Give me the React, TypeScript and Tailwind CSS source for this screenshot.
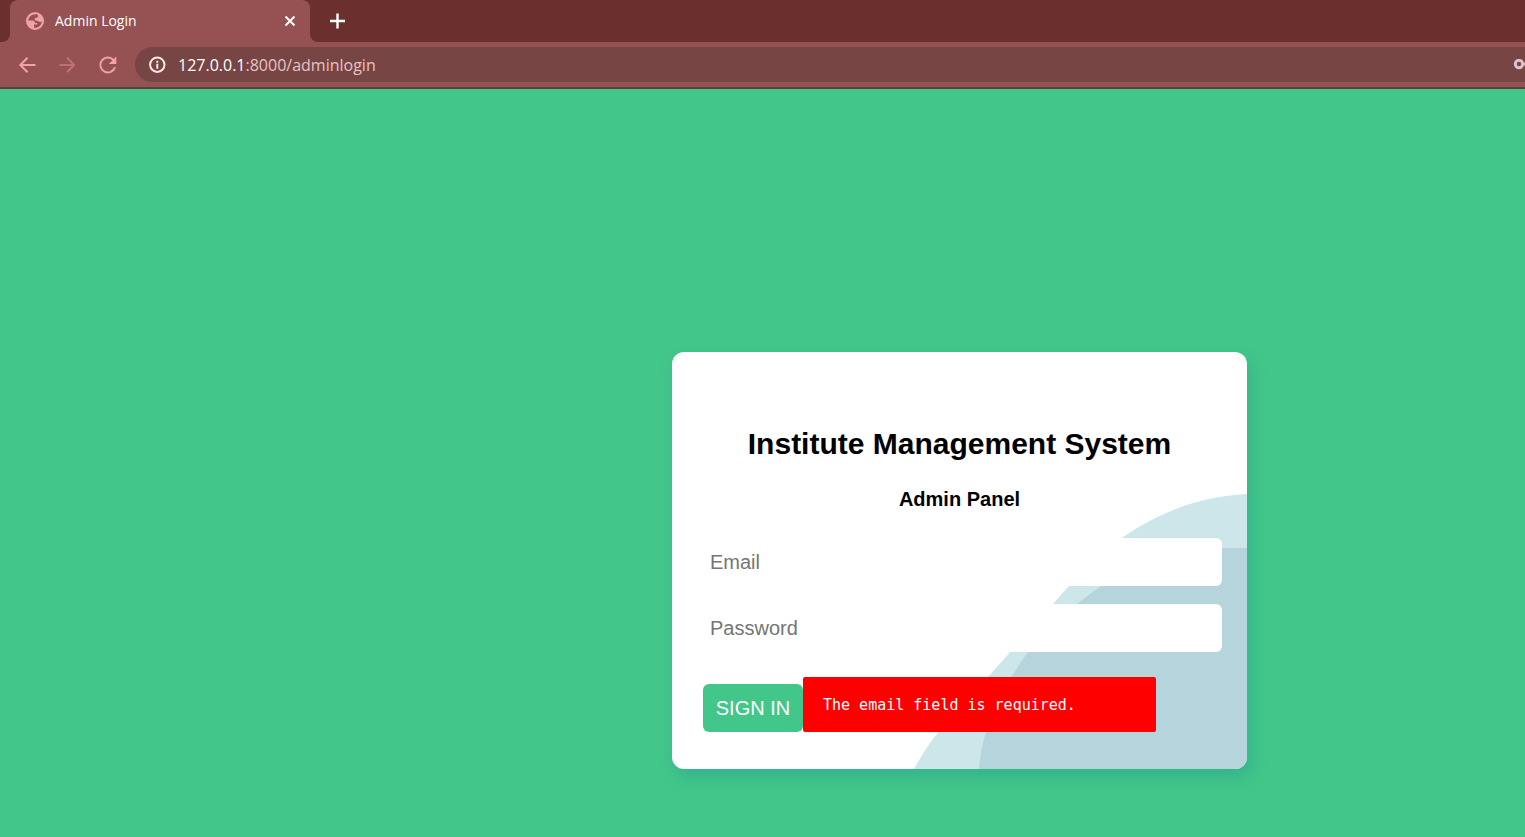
import React from "react";

function GlobeIcon() {
  return (
    <svg viewBox="0 0 18 18" className="size-[18px] shrink-0" aria-hidden="true">
      <circle cx="9" cy="9" r="9" fill="#f0a2a4" />
      <path
        d="M11.500 2.400C7 1.200 2.600 4.300 2.100 8.600H6.500C8 8.600 9 9.600 9 11H11.200V12.600H8V15.800C12.200 16.300 15.600 13.200 15.900 9.300C14.800 10.300 13.200 10.100 12.300 9.300C11.600 8.600 10.400 8.900 9.600 8.500C8.300 7.800 8.200 6.200 9.500 5.700H11C12 5.200 12.400 3.400 11.500 2.400Z"
        fill="#965152"
      />
    </svg>
  );
}

type IconProps = { d: string; fill?: string };

function LineIcon({ d, fill }: IconProps) {
  return (
    <svg viewBox="0 0 24 24" className="size-6" fill="none" stroke="currentColor" strokeWidth="2" aria-hidden="true">
      <path d={d} />
      {fill && <path d={fill} fill="currentColor" stroke="none" />}
    </svg>
  );
}

function BrowserChrome() {
  return (
    <header className="bg-[#965152] font-['Open_Sans','Noto_Sans',sans-serif]">
      <div className="flex h-[42px]">
        <div className="w-[10px] rounded-br-lg bg-[#6b2f2e]" />
        <div className="w-[300px] bg-[#6b2f2e]">
          <div className="flex h-[42px] items-center rounded-t-lg bg-[#965152] pl-4 pr-2">
            <GlobeIcon />
            <span className="ml-[11px] flex-1 text-sm text-white">Admin Login</span>
            <button type="button" aria-label="Close tab" className="text-white">
              <LineIcon d="M7.500 7.500L16.500 16.500M16.500 7.500L7.500 16.500" />
            </button>
          </div>
        </div>
        <div className="flex flex-1 items-center rounded-bl-lg bg-[#6b2f2e] pl-[15px]">
          <button type="button" aria-label="New tab" className="text-white">
            <svg viewBox="0 0 24 24" className="size-6" fill="none" stroke="currentColor" strokeWidth="2.400" aria-hidden="true">
              <path d="M12.500 5V20M5 12.500H20" transform="translate(0 -.5)" />
            </svg>
          </button>
        </div>
      </div>
      <div className="flex h-[47px] items-center overflow-hidden border-b-2 border-[#5e4038] pl-[15px]">
        <button type="button" aria-label="Back" className="mr-4 text-[#f0a2a4]">
          <LineIcon d="M20.500 12H5.500M12.500 4.800L5.300 12L12.500 19.200" />
        </button>
        <button type="button" aria-label="Forward" className="mr-4 text-[#bd7172]">
          <LineIcon d="M4.500 12H19M12 4.800L19.200 12L12 19.200" />
        </button>
        <button type="button" aria-label="Reload" className="mr-4 text-[#f0a2a4]">
          <LineIcon d="M20 14.300A7.500 7.500 0 1 1 18.300 6.800L20 8.700" fill="M21.300 3.500V11H13.800Z" />
        </button>
        <div className="flex h-[35px] flex-1 items-center overflow-hidden rounded-l-full bg-[#774544] pl-3">
          <svg viewBox="0 0 20 20" className="size-5 shrink-0 text-[#fbe9e9]" aria-hidden="true">
            <circle cx="10.300" cy="9.700" r="7.200" fill="none" stroke="currentColor" strokeWidth="2" />
            <path d="M9.300 8.700H11.300V13.700H9.300ZM9.300 5.700H11.300V7.700H9.300Z" fill="currentColor" />
          </svg>
          <span className="ml-[11px] flex-1 text-base text-[#e6c4c4]">
            <span className="text-white">127.0.0.1</span>:8000/adminlogin
          </span>
          <svg viewBox="0 0 12 12" className="h-3 w-3" aria-hidden="true">
            <circle cx="6" cy="5" r="3.700" fill="none" stroke="#dcc2c8" strokeWidth="3" />
            <path d="M9 5h3" stroke="#dcc2c8" strokeWidth="3" />
          </svg>
        </div>
      </div>
    </header>
  );
}

function CardBackdrop() {
  return (
    <svg viewBox="242 142 333 275" className="absolute bottom-0 right-0 h-[275px] w-[333px]" aria-hidden="true">
      <path d="M575 142C532 144 490 158 450 186C430 200 414 216 397 234L316 325C288 354 262 380 242 417H575Z" fill="#cde6e9" />
      <path d="M575 196H510C480 203 454 216 429 234C396 258 372 277 356 300C330 336 310 376 307 417H575Z" fill="#b5d4dc" />
    </svg>
  );
}

export default function App() {
  return (
    <div className="flex min-h-screen flex-col bg-[#43c689]">
      <BrowserChrome />
      <main className="flex flex-1 justify-center pb-16 pl-[394px] pt-[263px] font-['Liberation_Sans',Arial,sans-serif]">
        <section className="relative w-full max-w-[575px] self-start overflow-hidden rounded-xl bg-white pb-[37px] pt-[72px] shadow-[4px_8px_16px_rgba(30,150,150,0.4)]">
          <CardBackdrop />
          <div className="relative">
            <h1 className="text-center text-3xl font-bold leading-10 text-black">Institute Management System</h1>
            <h2 className="mt-[23px] text-center text-xl font-bold leading-6 text-black">Admin Panel</h2>
            <form className="mt-[27px] pl-[31px] pr-[25px]" onSubmit={(e) => e.preventDefault()}>
              <input
                type="email"
                aria-label="Email"
                placeholder="Email"
                className="block h-12 w-full rounded-md bg-white px-[7px] text-xl text-black outline-none placeholder:text-[#757575]"
              />
              <input
                type="password"
                aria-label="Password"
                placeholder="Password"
                className="mt-[18px] block h-12 w-full rounded-md bg-white px-[7px] text-xl text-black outline-none placeholder:text-[#757575]"
              />
              <div className="mt-[25px] flex items-end">
                <button type="submit" className="h-12 w-[100px] shrink-0 rounded-md bg-[#43c689] text-xl text-white">
                  SIGN IN
                </button>
                <p
                  role="alert"
                  className="w-[353px] rounded-xs bg-[#ff0000] pb-[15px] pl-5 pt-[17px] font-['DejaVu_Sans_Mono',monospace] text-[15px] leading-[23px] text-white"
                >
                  The email field is required.
                </p>
              </div>
            </form>
          </div>
        </section>
      </main>
    </div>
  );
}
